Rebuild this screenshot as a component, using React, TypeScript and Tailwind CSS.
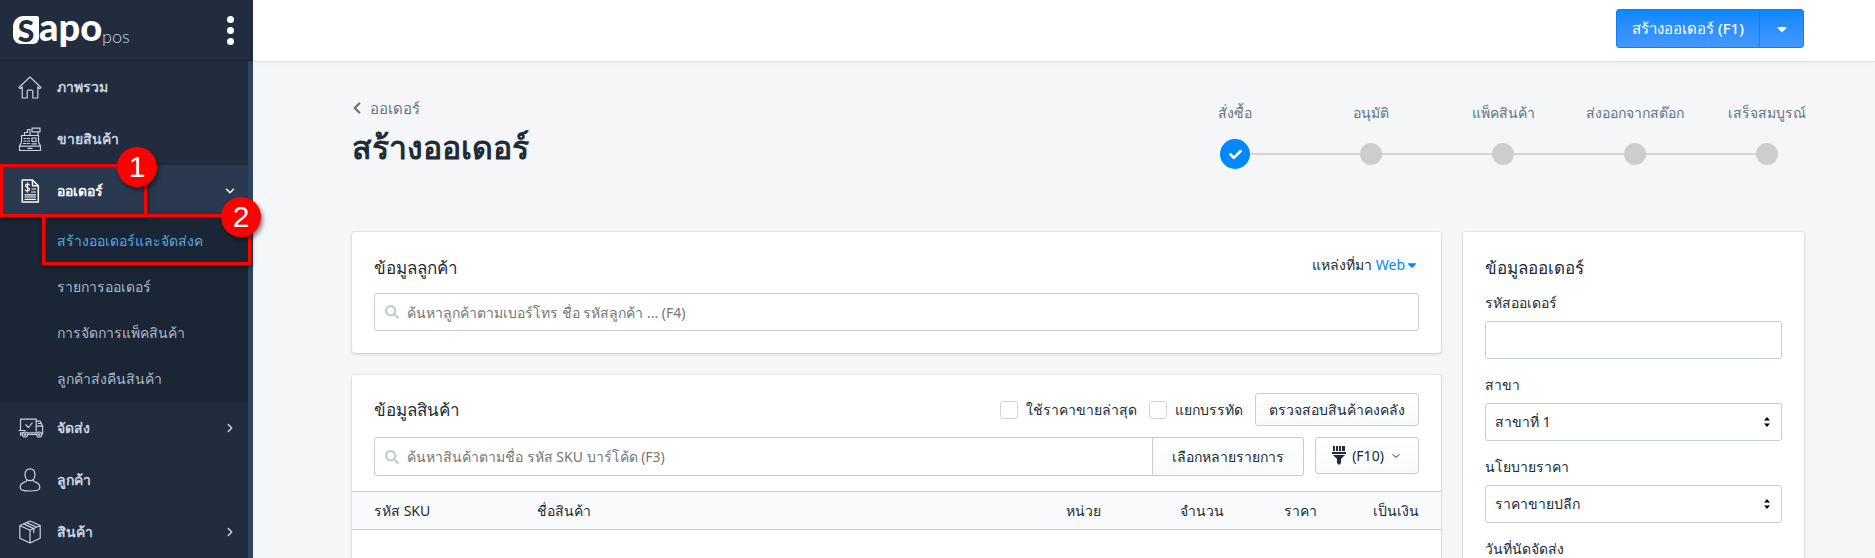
import React, { useState } from "react";
import clsx from "clsx";
import { FaCaretDown, FaCheck, FaSearch } from "react-icons/fa";
import { ChevronDown, ChevronLeft, ChevronRight } from "lucide-react";

type IconProps = { children: React.ReactNode };

const NavIcon: React.FC<IconProps> = ({ children }) => (
    <svg
        width={24}
        height={24}
        viewBox="0 0 24 24"
        fill="none"
        stroke="currentColor"
        strokeWidth={1.2}
        strokeLinecap="round"
        strokeLinejoin="round"
    >
        {children}
    </svg>
);

const HomeIcon = () => (
    <NavIcon>
        <path d="M1 12.5 12 2l11 10.5-1.2 1.2-2-1.8V23h-5v-6.5c0-.8-.5-1.3-1.2-1.3h-3.2c-.7 0-1.2.5-1.2 1.3V23h-5V11.9l-2 1.8z" />
    </NavIcon>
);

const RegisterIcon = () => (
    <NavIcon>
        <path d="M4 8.500h16.500v6.500l2 4v4.500h-21V19l2-4V8.500zM1.500 19.200h21M10 21.300h4" />
        <path d="M6.500 8.500V5.500h3v-3H12v6M14 1.200h8v3.600h-8zM17 4.800h3v3.700h-3" />
        <path d="M6 11.500h2M9.500 11.500h2M6 14h2M9.500 14h2M5.500 16.500h2.500M9.500 16.500h2M14 11h4v3.500h-4zM14 16.800h4.500" />
    </NavIcon>
);

const OrderIcon = () => (
    <NavIcon>
        <path d="M4.2 1h10.300l5.800 5.800V23H4.200zM14.500 1v5.800h5.800" strokeWidth={1.5} />
        <path d="M11.300 5.800C10.600 4.800 7.500 4.900 7.500 6.800s4 1.500 4 3.500-3.400 2.100-4.200.9M9.500 3.800v9.400" />
        <path d="M14 10h3.500M13.500 13h4M7 15.800h10.500M7 18h10.500M7 20.300h10.500" />
    </NavIcon>
);

const TruckIcon = () => (
    <svg width={26} height={20} viewBox="0 0 26 20" fill="none" stroke="currentColor" strokeWidth={1.2} strokeLinejoin="round">
        <path d="M2.5 12V1.200h15.700v12.600M.5 12.500h7M2 14.800h3.500M9.500 14.800h9.300M9.500 16.500h9.300M18.200 3.200h4l2.400 5v7.600h-1.100M18.200 8.200h6.400M20 5.500h3M4.500 17h-2v-2" />
        <path d="m7.500 6.500 3 3 4-5" />
        <circle cx="7" cy="16.5" r="2.5" />
        <circle cx="21.2" cy="16.5" r="2.5" />
        <circle cx="7" cy="16.5" r=".6" />
        <circle cx="21.2" cy="16.5" r=".6" />
    </svg>
);

const UserIcon = () => (
    <NavIcon>
        <path d="M12 .8c3.200 0 5 2.400 5 5.900s-2 6-5 6-5-2.500-5-6S8.800.8 12 .8z" />
        <path d="M9 12.200c-.3 1.200-1.200 1.600-3 2.200-2.800 1-3.800 2.600-3.800 5.300 0 2.300 3.500 3.300 9.800 3.300s9.800-1 9.800-3.300c0-2.700-1-4.300-3.800-5.300-1.800-.6-2.700-1-3-2.200" />
    </NavIcon>
);

const BoxIcon = () => (
    <NavIcon>
        <path d="M12 1 1.800 5.500v12.800L12 23l10.200-4.700V5.500zM1.800 5.500 12 10.200l10.200-4.700M12 10.200V23M5.500 3.900l10.300 4.700v4M8.500 2.600l10.200 4.600" />
    </NavIcon>
);

// filter brush on the (F10) button
const BrushIcon = () => (
    <svg width={14} height={20} viewBox="0 0 14 20" fill="currentColor">
        <path d="M1 0h2v5H1zM4 0h2v5H4zM7 0h2v5H7zM10 0h3v5h-3zM0 6h14v2H0zM1 9h12l-4 4v4l-2 2-2-2v-4z" />
    </svg>
);

interface NavItemProps {
    text: string;
    icon: React.ReactNode;
    active?: boolean;
    arrow?: "down" | "right";
    children?: React.ReactNode;
}

const NavItem: React.FC<NavItemProps> = ({ text, icon, active, arrow, children }) => (
    <li className="relative">
        <a
            href="#"
            className={clsx(
                "flex h-[52px] items-center pr-[11px] font-semibold",
                active ? "bg-[#2a3950] text-white" : "text-[#c8d3e0]"
            )}
        >
            <span className="flex w-[57px] justify-start pl-[18px]">{icon}</span>
            <span className="flex-1">{text}</span>
            {arrow === "down" && <ChevronDown size={14} strokeWidth={2.5} />}
            {arrow === "right" && <ChevronRight size={14} strokeWidth={2.5} />}
        </a>
        {children}
    </li>
);

const Badge: React.FC<{ text: string }> = ({ text }) => (
    <span className="absolute -top-5 -right-[13px] flex size-10 items-center justify-center rounded-full bg-[#fe0000] font-['Liberation_Sans',sans-serif] text-3xl text-white shadow-[2px_3px_4px_rgba(0,0,0,0.45)]">
        {text}
    </span>
);

const subItems = ["รายการออเดอร์", "การจัดการแพ็คสินค้า", "ลูกค้าส่งคืนสินค้า"];

const Sidebar: React.FC = () => (
    <aside className="relative z-10 flex w-[253px] shrink-0 flex-col bg-[#212d3f]">
        <div className="flex h-[62px] items-center justify-between border-b border-[#16202e] pr-[19px] pl-[13px] text-white">
            <div className="flex items-center">
                <span className="flex h-7 w-[26px] items-center justify-center rounded-tl-[10px] rounded-tr-[2px] rounded-br-[6px] rounded-bl-[8px] bg-white font-['Lato',sans-serif] text-3xl leading-7 font-black text-[#212d3f]">
                    S
                </span>
                <span className="-mt-2 font-['Lato',sans-serif] text-[38px] leading-10 font-black">apo</span>
                <span className="mt-3 font-['Lato',sans-serif] text-lg leading-6 font-light text-[#c8d3e0]">pos</span>
            </div>
            <button type="button" aria-label="เมนู" className="flex flex-col gap-1">
                <span className="size-[7px] rounded-full bg-white" />
                <span className="size-[7px] rounded-full bg-white" />
                <span className="size-[7px] rounded-full bg-white" />
            </button>
        </div>
        <nav className="flex-1 border-r-5 border-[#2c4462]">
            <ul>
                <NavItem text="ภาพรวม" icon={<HomeIcon />} />
                <NavItem text="ขายสินค้า" icon={<RegisterIcon />} />
                <NavItem text="ออเดอร์" icon={<OrderIcon />} active arrow="down">
                    <div className="pointer-events-none absolute -top-px left-0 z-10 h-[53px] w-[147px] border-3 border-[#fe0000] shadow-[1px_2px_4px_rgba(0,0,0,0.5)]">
                        <Badge text="1" />
                    </div>
                    <ul className="bg-[#1a2535] pt-px font-medium text-[#aeb9c8]">
                        <li className="relative">
                            <a href="#" className="flex h-[46px] items-center pl-[57px] text-[#56a9e0]">
                                สร้างออเดอร์และจัดส่งค
                            </a>
                            <div className="pointer-events-none absolute -top-1 -right-[3px] left-[42px] z-10 h-[51px] border-3 border-[#fe0000] shadow-[1px_2px_4px_rgba(0,0,0,0.5)]">
                                <Badge text="2" />
                            </div>
                        </li>
                        {subItems.map((item) => (
                            <li key={item}>
                                <a href="#" className="flex h-[46px] items-center pl-[57px]">
                                    {item}
                                </a>
                            </li>
                        ))}
                    </ul>
                </NavItem>
                <NavItem text="จัดส่ง" icon={<TruckIcon />} arrow="right" />
                <NavItem text="ลูกค้า" icon={<UserIcon />} />
                <NavItem text="สินค้า" icon={<BoxIcon />} arrow="right" />
            </ul>
        </nav>
    </aside>
);

const steps = ["สั่งซื้อ", "อนุมัติ", "แพ็คสินค้า", "ส่งออกจากสต๊อก", "เสร็จสมบูรณ์"];

const Stepper: React.FC = () => (
    <ol className="-mr-[29px] flex text-[#637381]">
        {steps.map((step, i) => (
            <li key={step} className={clsx("flex flex-col items-center", i === 0 ? "w-[140px]" : "w-[132px]")}>
                <span className="leading-5">{step}</span>
                <span className="mt-4 flex h-[30px] w-full items-center">
                    <span className={clsx("h-[2px] flex-1", i > 0 && "bg-[#d3d5d7]")} />
                    {i === 0 ? (
                        <span className="flex size-[30px] items-center justify-center rounded-full bg-[#0088ff] text-white">
                            <FaCheck size={13} />
                        </span>
                    ) : (
                        <span className="size-[22px] rounded-full bg-[#cdcdcd]" />
                    )}
                    <span className={clsx("h-[2px] flex-1", i < steps.length - 1 && "bg-[#d3d5d7]")} />
                </span>
            </li>
        ))}
    </ol>
);

const Card: React.FC<{ className?: string; children: React.ReactNode }> = ({ className, children }) => (
    <section className={clsx("rounded-[3px] bg-white shadow-[0_0_0_1px_rgba(63,63,68,0.05),0_1px_3px_rgba(63,63,68,0.2)]", className)}>
        {children}
    </section>
);

const SearchBox: React.FC<{ placeholder: string; className: string }> = ({ placeholder, className }) => (
    <label className={clsx("flex flex-1 items-center gap-2 border border-[#c4cdd5] bg-white px-[10px]", className)}>
        <FaSearch size={14} className="shrink-0 text-[#c4cdd5]" />
        <input
            type="text"
            aria-label={placeholder}
            placeholder={placeholder}
            className="h-full w-full outline-none placeholder:text-[#757575]"
        />
    </label>
);

interface SelectProps {
    id: string;
    label: string;
    value: string;
}

const SelectField: React.FC<SelectProps> = ({ id, label, value }) => (
    <div>
        <label htmlFor={id} className="block leading-5">
            {label}
        </label>
        <div className="relative mt-2">
            <select id={id} className="h-[38px] w-full appearance-none rounded-[3px] border border-[#c4cdd5] bg-white px-[9px]">
                <option>{value}</option>
            </select>
            <svg viewBox="0 0 6 10" className="pointer-events-none absolute top-[14px] right-3 h-[10px] w-[6px]">
                <path d="M3 0 0 3.5h6zM3 10 0 6.500h6z" />
            </svg>
        </div>
    </div>
);

const App: React.FC = () => {
    const [lastPrice, setLastPrice] = useState(false);
    const [splitLine, setSplitLine] = useState(false);

    const checks = [
        { text: "ใช้ราคาขายล่าสุด", checked: lastPrice, onChange: setLastPrice },
        { text: "แยกบรรทัด", checked: splitLine, onChange: setSplitLine },
    ];

    return (
        <div className="flex h-screen overflow-hidden bg-[#f4f6f8] font-['Noto_Sans',sans-serif] text-sm text-[#212b36]">
            <Sidebar />
            <div className="min-w-0 flex-1">
                <header className="flex h-[62px] items-start justify-end border-b border-[#dfe3e8] bg-white pt-[9px] pr-[71px] shadow-[0_1px_3px_rgba(0,0,0,0.05)]">
                    <div className="flex h-[39px] rounded-[3px] border border-[#0b80f5] bg-linear-to-b from-[#0a88ff] to-[#4298ff] text-white">
                        <button type="button" className="w-[143px] border-r border-[#0b80f5] text-[15px] font-medium">
                            สร้างออเดอร์ (F1)
                        </button>
                        <button type="button" aria-label="เพิ่มเติม" className="flex w-[43px] items-center justify-center">
                            <FaCaretDown size={16} />
                        </button>
                    </div>
                </header>

                <main className="pr-[71px] pl-[99px]">
                    <div className="flex justify-between pt-9">
                        <div>
                            <a href="#" className="flex items-center gap-1 text-[15px] leading-5 text-[#637381]">
                                <ChevronLeft size={18} strokeWidth={3} className="-ml-1" />
                                ออเดอร์
                            </a>
                            <h1 className="mt-2 text-[32px] leading-[42px] font-bold">สร้างออเดอร์</h1>
                        </div>
                        <div className="pt-[5px]">
                            <Stepper />
                        </div>
                    </div>

                    <div className="mt-[63px] flex items-start gap-[22px]">
                        <div className="min-w-0 flex-1 space-y-[22px]">
                            <Card className="px-[22px] pt-6 pb-[22px]">
                                <div className="flex items-start justify-between">
                                    <h2 className="text-[17px] leading-6">ข้อมูลลูกค้า</h2>
                                    <span className="-mt-px flex items-center gap-1">
                                        แหล่งที่มา
                                        <button type="button" className="flex items-center text-[#0088ff]">
                                            Web <FaCaretDown size={14} />
                                        </button>
                                    </span>
                                </div>
                                <div className="mt-[13px] flex">
                                    <SearchBox placeholder="ค้นหาลูกค้าตามเบอร์โทร ชื่อ รหัสลูกค้า ... (F4)" className="h-[38px] rounded-[3px]" />
                                </div>
                            </Card>

                            <Card className="h-[240px] pt-[18px]">
                                <div className="flex items-center px-[22px]">
                                    <h2 className="flex-1 text-[17px] leading-6">ข้อมูลสินค้า</h2>
                                    {checks.map((check) => (
                                        <label key={check.text} className="mr-3 flex items-center gap-2">
                                            <input
                                                type="checkbox"
                                                checked={check.checked}
                                                onChange={(e) => check.onChange(e.target.checked)}
                                                className="size-[18px] appearance-none rounded-[3px] border border-[#ced4da] bg-white checked:bg-[#0088ff]"
                                            />
                                            {check.text}
                                        </label>
                                    ))}
                                    <button type="button" className="h-[33px] w-[164px] rounded-[3px] border border-[#c4cdd5] bg-linear-to-b from-white to-[#f9fafb]">
                                        ตรวจสอบสินค้าคงคลัง
                                    </button>
                                </div>
                                <div className="mt-[11px] flex px-[22px]">
                                    <SearchBox placeholder="ค้นหาสินค้าตามชื่อ รหัส SKU บาร์โค้ด (F3)" className="h-[39px] rounded-l-[3px]" />
                                    <button type="button" className="h-[39px] w-[151px] rounded-r-[3px] border border-l-0 border-[#c4cdd5] bg-linear-to-b from-white to-[#f9fafb]">
                                        เลือกหลายรายการ
                                    </button>
                                    <button
                                        type="button"
                                        className="ml-[11px] flex h-[37px] w-[104px] items-center justify-center gap-1.5 rounded-[3px] border border-[#c4cdd5] bg-linear-to-b from-white to-[#f9fafb]"
                                    >
                                        <BrushIcon />
                                        <span>(F10)</span>
                                        <ChevronDown size={12} />
                                    </button>
                                </div>
                                <table className="mt-[15px] w-full table-fixed">
                                    <thead>
                                        <tr className="h-[38px] border-y border-[#c4cdd5] bg-[#f9fafb] [&>th]:font-normal">
                                            <th className="w-[185px] pl-[22px] text-left">รหัส SKU</th>
                                            <th className="text-left">ชื่อสินค้า</th>
                                            <th className="w-[72px] text-left">หน่วย</th>
                                            <th className="w-[86px] text-right">จำนวน</th>
                                            <th className="w-[93px] text-right">ราคา</th>
                                            <th className="w-[124px] pr-[22px] text-right">เป็นเงิน</th>
                                        </tr>
                                    </thead>
                                </table>
                            </Card>
                        </div>

                        <Card className="w-[341px] shrink-0 px-[22px] pt-6 pb-[22px]">
                            <h2 className="text-[17px] leading-6">ข้อมูลออเดอร์</h2>
                            <div className="mt-[13px] space-y-4">
                                <div>
                                    <label htmlFor="code" className="block leading-5">
                                        รหัสออเดอร์
                                    </label>
                                    <input id="code" type="text" className="mt-2 h-[38px] w-full rounded-[3px] border border-[#c4cdd5] bg-white px-[9px]" />
                                </div>
                                <SelectField id="branch" label="สาขา" value="สาขาที่ 1" />
                                <SelectField id="policy" label="นโยบายราคา" value="ราคาขายปลีก" />
                                <div>
                                    <label htmlFor="due" className="block leading-5">
                                        วันที่นัดจัดส่ง
                                    </label>
                                    <input id="due" type="text" className="mt-2 h-[38px] w-full rounded-[3px] border border-[#c4cdd5] bg-white px-[9px]" />
                                </div>
                            </div>
                        </Card>
                    </div>
                </main>
            </div>
        </div>
    );
};

export default App;
